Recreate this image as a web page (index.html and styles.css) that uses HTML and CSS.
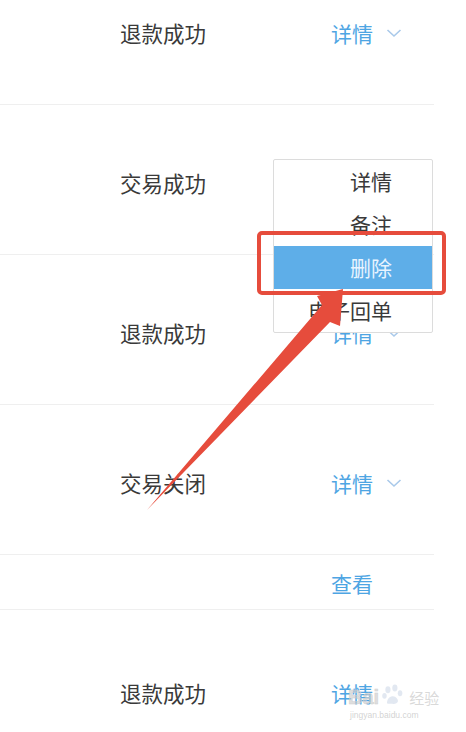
FILE: index.html
```html
<!DOCTYPE html>
<html>
<head>
<meta charset="utf-8">
<link rel="stylesheet" href="styles.css">
</head>
<body>
<div class="page">
  <div class="list">
    <div class="row">
      <span class="status">退款成功</span>
      <span class="action">详情<svg class="chev" viewBox="0 0 16 10"><path d="M1.5 2 L8 8 L14.5 2" /></svg></span>
    </div>
    <div class="row">
      <span class="status">交易成功</span>
      <span class="action"></span>
    </div>
    <div class="row">
      <span class="status">退款成功</span>
      <span class="action">详情<svg class="chev" viewBox="0 0 16 10"><path d="M1.5 2 L8 8 L14.5 2" /></svg></span>
    </div>
    <div class="row">
      <span class="status">交易关闭</span>
      <span class="action">详情<svg class="chev" viewBox="0 0 16 10"><path d="M1.5 2 L8 8 L14.5 2" /></svg></span>
    </div>
    <div class="row short">
      <span class="status"></span>
      <span class="action">查看</span>
    </div>
    <div class="row last">
      <span class="status">退款成功</span>
      <span class="action">详情</span>
    </div>
  </div>

  <div class="menu">
    <div class="item">详情</div>
    <div class="item">备注</div>
    <div class="item active">删除</div>
    <div class="item">电子回单</div>
  </div>

  <div class="highlight"></div>

  <svg class="arrow" viewBox="0 0 466 732" width="466" height="732">
    <polygon points="147,510 330,322 340,326 343,289 317,296 322,305" />
  </svg>

  <div class="watermark">
    <div class="wm-top"><span class="wm-bai">Bai</span><svg class="paw" viewBox="0 0 30 24"><ellipse cx="8" cy="6" rx="3" ry="4"/><ellipse cx="16" cy="4" rx="3" ry="4"/><ellipse cx="4" cy="13" rx="2.6" ry="3.4"/><ellipse cx="22" cy="10" rx="2.6" ry="3.4"/><path d="M7 20 C8 13 16 11 19 17 C21 21 17 23 13 22 C10 22 6 23 7 20Z"/></svg><span class="wm-jy">经验</span></div>
    <div class="wm-url">jingyan.baidu.com</div>
  </div>
</div>
</body>
</html>
```

FILE: styles.css
```css
html, body {
  margin: 0;
  padding: 0;
  background: #ffffff;
}
body {
  font-family: "Noto Sans CJK SC", "Noto Sans", sans-serif;
  width: 466px;
  height: 732px;
  overflow: hidden;
}
.page {
  position: relative;
  width: 466px;
  height: 732px;
  overflow: hidden;
}
.list {
  margin-top: -45px;
  width: 434px;
}
.row {
  display: grid;
  grid-template-columns: 331px 1fr;
  align-items: center;
  border-bottom: 1px solid #efefef;
  padding-top: 6px;
  box-sizing: border-box;
  height: 150px;
}
.row.short {
  height: 55px;
  padding-top: 2px;
}
.row.last {
  border-bottom: none;
  height: 160px;
}
.status {
  padding-left: 120px;
  font-size: 21.5px;
  color: #3a3a3a;
  line-height: 28px;
}
.action {
  display: flex;
  align-items: center;
  font-size: 21px;
  color: #4ea5e3;
  line-height: 28px;
}
.chev {
  width: 16px;
  height: 10px;
  margin-left: 13px;
  fill: none;
  stroke: #a9c9ea;
  stroke-width: 1.6;
}
.menu {
  position: absolute;
  left: 273px;
  top: 159px;
  width: 160px;
  background: #fff;
  border: 1px solid #dcdcdc;
  border-radius: 2px;
  box-sizing: border-box;
}
.item {
  height: 43px;
  line-height: 43px;
  text-align: right;
  padding-right: 40px;
  font-size: 21px;
  color: #3a3a3a;
}
.item.active {
  background: #5eaee8;
  color: #e8f4ff;
}
.highlight {
  position: absolute;
  left: 257px;
  top: 231px;
  width: 189px;
  height: 64px;
  border: 4px solid #e64c3c;
  border-radius: 5px;
  box-sizing: border-box;
}
.arrow {
  position: absolute;
  left: 0;
  top: 0;
}
.arrow polygon {
  fill: #e64c3c;
}
.watermark {
  position: absolute;
  left: 348px;
  top: 680px;
  color: #d6d6d6;
  font-family: "Liberation Sans", sans-serif;
}
.wm-top {
  display: flex;
  align-items: flex-end;
  height: 28px;
}
.wm-bai {
  font-size: 20px;
  font-weight: bold;
  line-height: 22px;
  color: rgba(200,200,200,0.6);
  -webkit-text-stroke: 0.5px #d0d0d0;
}
.paw {
  width: 26px;
  height: 22px;
  fill: rgba(190,205,225,0.45);
  margin: 0 2px 2px 2px;
}
.wm-jy {
  font-family: "Noto Sans CJK SC", sans-serif;
  font-size: 15px;
  line-height: 20px;
  color: rgba(200,200,200,0.7);
}
.wm-url {
  font-size: 8.5px;
  color: rgba(200,200,200,0.8);
  margin-top: 2px;
  margin-left: 2px;
}
```
